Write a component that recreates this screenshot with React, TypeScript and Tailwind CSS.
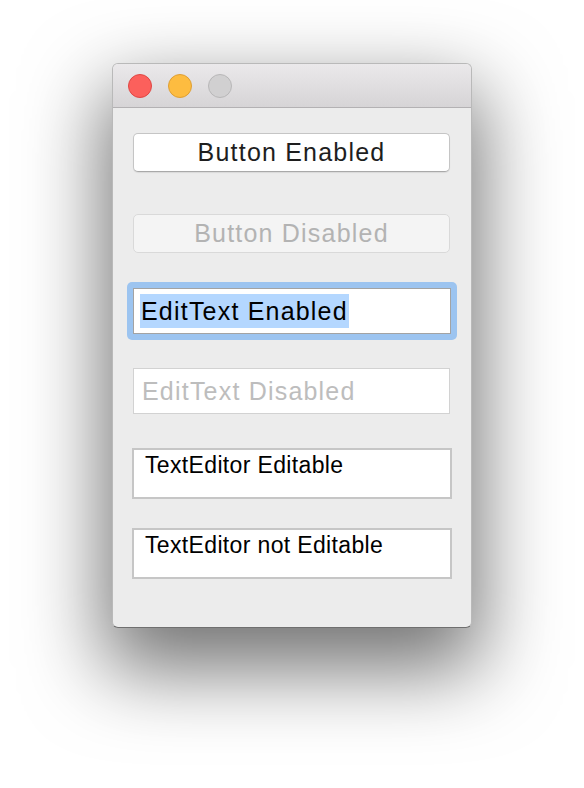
import React from "react";

const sans = "font-['Helvetica_Neue','Liberation_Sans',Arial,sans-serif]";

function Light({ color }: { color: string }) {
  return <span className={"block h-6 w-6 rounded-full border " + color} />;
}

export default function App() {
  return (
    <div className="flex min-h-[788px] w-full justify-center bg-white pt-[63px]">
      <div className="flex h-[565px] w-[360px] flex-col overflow-hidden rounded-[6px] border border-[#b9b9b9] border-b-[#6f6f6f] bg-[#ececec] shadow-[0_34px_80px_8px_rgba(0,0,0,0.55)]">
        <div className="flex h-[44px] shrink-0 items-center gap-4 border-b border-[#b3b1b3] bg-gradient-to-b from-[#ebe9eb] to-[#d6d4d6] pl-[15px] pt-[1px]">
          <Light color="bg-[#fc605c] border-[#df4744]" />
          <Light color="bg-[#fdbc40] border-[#de9f34]" />
          <Light color="bg-[#d1d0d1] border-[#b8b7b8]" />
        </div>

        <div className={"flex flex-col pl-[20px] pr-[21px] pt-[25px] " + sans}>
          <button className="flex h-[39px] w-[317px] items-center justify-center rounded-[5px] border border-[#c5c5c5] border-b-[#a9a9a9] bg-white text-[25px] leading-none tracking-[1.2px] text-[#1e1e1e] shadow-[0_1px_1px_rgba(0,0,0,0.08)]">
            Button Enabled
          </button>

          <button
            disabled
            className="mt-[42px] flex h-[39px] w-[317px] items-center justify-center rounded-[5px] border border-[#d9d9d9] bg-[#f4f4f4] text-[25px] leading-none tracking-[1.2px] text-[#b3b3b3]"
          >
            Button Disabled
          </button>

          <div className="ml-[-6px] mt-[29px] w-[330px] rounded-[5px] bg-[#9cc4f0] p-[6px]">
            <div className="flex h-[46px] items-center border border-[#a3a3a3] bg-white pl-[6px]">
              <span className="bg-[#b4d7ff] px-[1px] py-[4px] text-[25px] leading-[26px] tracking-[1.2px] text-black">
                EditText Enabled
              </span>
            </div>
          </div>

          <div className="mt-[28px] flex h-[46px] w-[317px] items-center border border-[#d2d2d2] bg-white pl-[8px] text-[25px] leading-none tracking-[1.2px] text-[#bdbdbd]">
            EditText Disabled
          </div>

          <div className="ml-[-1px] mt-[34px] h-[51px] w-[320px] border-2 border-[#c6c6c6] bg-white pl-[11px] pt-[2px] text-[23px] leading-[26px] tracking-[0.35px] text-black">
            TextEditor Editable
          </div>

          <div className="ml-[-1px] mt-[29px] h-[51px] w-[320px] border-2 border-[#c6c6c6] bg-white pl-[11px] pt-[2px] text-[23px] leading-[26px] tracking-[0.35px] text-black">
            TextEditor not Editable
          </div>
        </div>
      </div>
    </div>
  );
}
